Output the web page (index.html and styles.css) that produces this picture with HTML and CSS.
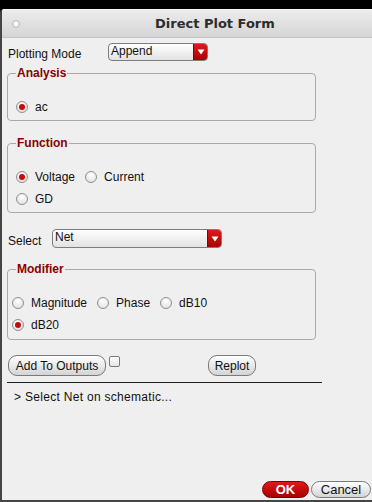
FILE: index.html
```html
<!DOCTYPE html>
<html lang="en">
<head>
    <meta charset="UTF-8">
    <title>Direct Plot Form</title>
    <link rel="stylesheet" href="styles.css">
</head>
<body>
    <div class="window">
        <div class="titlebar">
            <span class="win-dot"></span>
            <span class="title">Direct Plot Form</span>
        </div>

        <div class="content">
            <!-- Plotting mode -->
            <div class="field-row mode-row">
                <span class="field-label mode-label">Plotting Mode</span>
                <div class="combo combo-mode">
                    <span class="combo-text">Append</span>
                    <span class="combo-arrow">
                        <svg width="8" height="6" viewBox="0 0 8 6"><path d="M0.5 0.5 L7.5 0.5 L4 5.5 Z" fill="#fff"/></svg>
                    </span>
                </div>
            </div>

            <fieldset class="group analysis">
                <legend>Analysis</legend>
                <div class="radio-row">
                    <span class="radio checked"><span class="radio-box"></span>ac</span>
                </div>
            </fieldset>

            <fieldset class="group function">
                <legend>Function</legend>
                <div class="radio-row">
                    <span class="radio checked"><span class="radio-box"></span>Voltage</span>
                    <span class="radio"><span class="radio-box"></span>Current</span>
                </div>
                <div class="radio-row">
                    <span class="radio"><span class="radio-box"></span>GD</span>
                </div>
            </fieldset>

            <!-- Select -->
            <div class="field-row select-row">
                <span class="field-label select-label">Select</span>
                <div class="combo combo-select">
                    <span class="combo-text">Net</span>
                    <span class="combo-arrow">
                        <svg width="8" height="6" viewBox="0 0 8 6"><path d="M0.5 0.5 L7.5 0.5 L4 5.5 Z" fill="#fff"/></svg>
                    </span>
                </div>
            </div>

            <fieldset class="group modifier">
                <legend>Modifier</legend>
                <div class="radio-row">
                    <span class="radio"><span class="radio-box"></span>Magnitude</span>
                    <span class="radio"><span class="radio-box"></span>Phase</span>
                    <span class="radio"><span class="radio-box"></span>dB10</span>
                </div>
                <div class="radio-row">
                    <span class="radio checked"><span class="radio-box"></span>dB20</span>
                </div>
            </fieldset>

            <div class="button-row">
                <button class="btn btn-add">Add To Outputs</button>
                <span class="checkbox"></span>
                <button class="btn btn-replot">Replot</button>
            </div>

            <div class="separator"></div>
            <p class="status">&gt; Select Net on schematic...</p>
        </div>

        <div class="footer">
            <button class="btn btn-ok">OK</button>
            <button class="btn btn-cancel">Cancel</button>
        </div>
    </div>
</body>
</html>
```

FILE: styles.css
```css
:root {
    --window-bg: #efefef;
    --frame: #454545;
    --group-border: #a9a9a9;
    --legend: #8a0000;
    --red: #c40d0d;
    --red-dark: #8f0000;
    --text: #111111;
}

* {
    box-sizing: border-box;
}

body {
    margin: 0;
    padding-top: 9px;
    background-color: #000000;
    font-family: 'Liberation Sans', Arial, sans-serif;
    font-size: 12px;
    color: var(--text);
}

.window {
    height: 493px;
    background-color: var(--window-bg);
    border-left: 2px solid var(--frame);
    border-bottom: 2px solid var(--frame);
    border-top-left-radius: 4px;
    display: flex;
    flex-direction: column;
    overflow: hidden;
}

.titlebar {
    height: 29px;
    flex-shrink: 0;
    display: flex;
    align-items: center;
    background: linear-gradient(180deg, #ececec, #d5d5d5);
    border-top: 1px solid #f6f6f6;
    border-bottom: 1px solid #c4c4c4;
}

.win-dot {
    width: 8px;
    height: 8px;
    margin-left: 10px;
    border-radius: 50%;
    background: radial-gradient(circle at 50% 40%, #ffffff, #e4e4e4);
    border: 1px solid #b8b8b8;
}

.title {
    margin-left: 135px;
    font-family: 'DejaVu Sans', sans-serif;
    font-weight: 700;
    font-size: 13px;
    color: #2c2c2c;
}

.content {
    padding-left: 5px;
    display: flex;
    flex-direction: column;
}

/* label + combo rows */
.field-row {
    display: flex;
    align-items: center;
}

.mode-row {
    margin-top: 5px;
}

.select-row {
    margin-top: 16px;
}

.field-label {
    padding-top: 4px;
    padding-left: 1px;
}

.mode-label {
    width: 101px;
}

.select-label {
    width: 45px;
}

.combo {
    display: flex;
    align-items: stretch;
    height: 19px;
    border: 1px solid #7d7d7d;
    border-radius: 4px;
    background: linear-gradient(180deg, #ffffff, #e2e2e2);
    overflow: hidden;
}

.combo-mode {
    width: 100px;
    height: 18px;
}

.combo-select {
    width: 170px;
}

.combo-text {
    flex-grow: 1;
    padding-left: 2px;
    line-height: 14px;
}

.combo-arrow {
    width: 14px;
    display: flex;
    align-items: center;
    justify-content: center;
    background: linear-gradient(180deg, #de1a1a, #a80000);
    border-left: 1px solid #8c0000;
}

/* group boxes */
.group {
    width: 309px;
    margin: 0;
    padding: 19px 8px 5px 8px;
    border: 1px solid var(--group-border);
    border-radius: 4px;
    display: flex;
    flex-direction: column;
    gap: 6px;
}

.group legend {
    padding: 0 1px;
    font-weight: 700;
    line-height: 14px;
    color: var(--legend);
}

.analysis {
    margin-top: 5px;
}

.function {
    margin-top: 15px;
}

.modifier {
    margin-top: 14px;
    padding-bottom: 6px;
}

.modifier .radio-row {
    margin-left: -4px;
}

.radio-row {
    display: flex;
    gap: 10px;
    height: 16px;
    align-items: center;
}

.radio {
    display: inline-flex;
    align-items: center;
    gap: 7px;
}

.radio-box {
    width: 12px;
    height: 12px;
    border-radius: 50%;
    border: 1px solid #8e8e8e;
    background: radial-gradient(circle at 50% 30%, #ffffff, #dcdcdc);
    display: flex;
    align-items: center;
    justify-content: center;
}

.radio.checked .radio-box::after {
    content: '';
    width: 6px;
    height: 6px;
    border-radius: 50%;
    background-color: #c80a0a;
}

/* buttons */
.button-row {
    display: flex;
    align-items: flex-start;
    margin-top: 15px;
}

.btn {
    margin: 0;
    font-family: 'Liberation Sans', Arial, sans-serif;
    font-size: 12px;
    color: var(--text);
    border: 1px solid #7a7a7a;
    border-radius: 9px;
    background: linear-gradient(180deg, #ffffff, #d4d4d4);
    padding: 0;
    line-height: 14px;
}

.btn-add {
    width: 98px;
    height: 21px;
    margin-left: 1px;
}

.checkbox {
    width: 11px;
    height: 11px;
    margin-left: 3px;
    margin-top: 1px;
    border: 1px solid #7a7a7a;
    border-radius: 2px;
    background: linear-gradient(180deg, #ffffff, #e4e4e4);
}

.btn-replot {
    width: 48px;
    height: 21px;
    margin-left: 88px;
}

.separator {
    width: 315px;
    height: 1px;
    margin-top: 6px;
    background-color: #1e1e1e;
}

.status {
    margin: 6px 0 0 7px;
    line-height: 16px;
    letter-spacing: 0.3px;
}

.footer {
    margin-top: auto;
    display: flex;
    justify-content: flex-end;
    gap: 2px;
    padding-bottom: 2px;
    padding-right: 1px;
}

.btn-ok {
    width: 47px;
    height: 17px;
    font-weight: 700;
    font-size: 13px;
    color: #ffffff;
    border-color: #7c0000;
    background: linear-gradient(180deg, #e41818, #a80000);
}

.btn-cancel {
    width: 60px;
    height: 17px;
    font-size: 13px;
}
```
